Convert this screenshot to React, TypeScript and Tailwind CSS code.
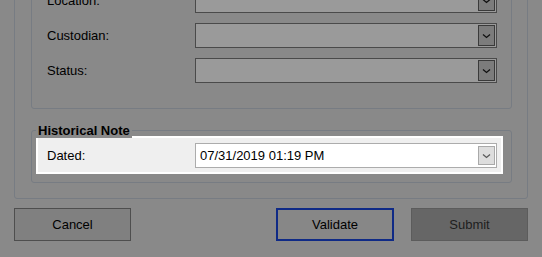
import React from "react";

// Dimmed form with the "Historical Note" group highlighted

const FONT = { fontFamily: '"Liberation Sans", Arial, sans-serif' };

function Chevron({ color }: { color: string }) {
  return (
    <svg width="9" height="6" viewBox="0 0 9 6" fill="none">
      <path d="M1 1.5 L4.5 4.5 L8 1.5" stroke={color} strokeWidth="1.3" />
    </svg>
  );
}

function GrayCombo() {
  return (
    <div className="flex h-[25px] w-[302px] items-center justify-end border border-[#4a4a4a] bg-[#9a9a9a] p-[1px]">
      <div className="flex h-[21px] w-[17px] items-center justify-center border border-[#3a3a3a] bg-[#7c7c7c]">
        <Chevron color="#111111" />
      </div>
    </div>
  );
}

const ROWS = ["Location:", "Custodian:", "Status:"];

export default function App() {
  return (
    <div
      className="h-[257px] w-[542px] overflow-hidden bg-[#898989] text-[13px] text-black"
      style={FONT}
    >
      {/* outer group box */}
      <div className="mx-[14px] mt-[-40px] rounded-[3px] border border-[#777c83] pb-[15px] pl-[16px] pr-[15px] pt-[9px]">
        {/* asset details group */}
        <div className="flex flex-col gap-[10px] rounded-[3px] border border-[#777c83] pb-[25px] pl-[15px] pr-[14px] pt-[17px]">
          {ROWS.map((label) => (
            <div key={label} className="flex items-center">
              <span className="w-[148px] leading-none">{label}</span>
              <GrayCombo />
            </div>
          ))}
        </div>

        {/* historical note group */}
        <div className="relative mt-[21px] rounded-[3px] border border-[#777c83] pb-[8px] pl-[4px] pr-[8px] pt-[5px]">
          <span className="absolute left-[4px] top-[-8px] bg-[#898989] px-[2px] text-[13px] font-bold leading-[15px]">
            Historical Note
          </span>
          <div className="flex items-center border-2 border-white bg-[#efefef] pb-[4px] pl-[9px] pr-[4px] pt-[5px]">
            <span className="w-[148px] leading-none">Dated:</span>
            <div className="flex h-[25px] w-[302px] items-center justify-between border border-[#acacac] bg-white pl-[4px] pr-[1px]">
              <span className="leading-none">07/31/2019 01:19 PM</span>
              <div className="flex h-[19px] w-[17px] items-center justify-center border border-[#a9a9a9] bg-[#dddddd]">
                <Chevron color="#5a5a5a" />
              </div>
            </div>
          </div>
        </div>
      </div>

      {/* buttons */}
      <div className="mx-[14px] mt-[9px] flex justify-between">
        <button className="h-[33px] w-[117px] border border-[#4e4e4e] bg-[#808080] text-[13px]">
          Cancel
        </button>
        <div className="flex gap-[17px]">
          <button className="h-[33px] w-[118px] border-2 border-[#0f2a86] bg-[#878787] text-[13px]">
            Validate
          </button>
          <button className="h-[33px] w-[117px] border border-[#5c5c5c] bg-[#666666] text-[13px] text-[#1e1e1e]">
            Submit
          </button>
        </div>
      </div>
    </div>
  );
}
